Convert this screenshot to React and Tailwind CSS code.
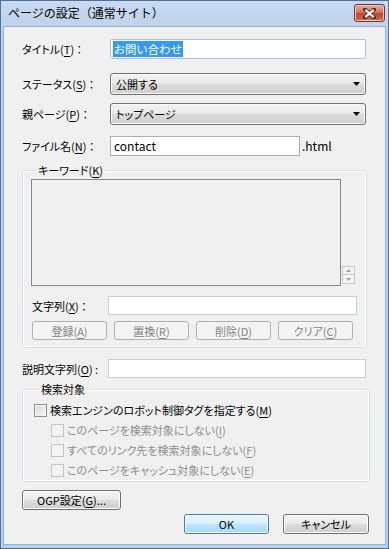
import React from "react";

// mnemonic letter
const U = ({ children }) => <span className="underline underline-offset-[2px]">{children}</span>;

const field = "border border-[#abadb3] bg-white";

const Select = ({ value }) => (
  <div className="flex h-[22px] w-[256px] items-center rounded-[3px] border border-[#707070] bg-[linear-gradient(#f2f2f2,#ebebeb_45%,#dddddd_50%,#cfcfcf)] pl-[5px] shadow-[inset_0_0_0_1px_#fbfbfb]">
    <span className="leading-none">{value}</span>
    <svg className="ml-auto mr-[5px]" width="7" height="4" viewBox="0 0 7 4">
      <path d="M0 0h7L3.5 4z" fill="#000" />
    </svg>
  </div>
);

const GrayBtn = ({ children, w }) => (
  <div
    className={`flex h-[19px] ${w} items-center justify-center rounded-[3px] border border-[#adb2b5] bg-[#f4f4f4] text-[#838383]`}
  >
    {children}
  </div>
);

const Btn = ({ children, w, primary }) => (
  <div
    className={`flex h-[20px] ${w} items-center justify-center rounded-[3px] border ${
      primary
        ? "border-[#3c7fb1] bg-[linear-gradient(#eaf6fd,#d9f0fc_50%,#bee6fd_50%,#a7d9f5)]"
        : "border-[#707070] bg-[linear-gradient(#f2f2f2,#ebebeb_50%,#dddddd_50%,#cfcfcf)]"
    } shadow-[inset_0_0_0_1px_#fcfcfc]`}
  >
    {children}
  </div>
);

const Check = ({ children, disabled, indent }) => (
  <div className={`flex h-[20px] items-center ${indent ? "ml-[17px]" : ""}`}>
    <span
      className={`h-[13px] w-[13px] border ${
        disabled
          ? "border-[#c4c4c4] bg-[#f4f4f4]"
          : "border-[#8f8f8f] bg-[linear-gradient(135deg,#d8d8d8,#f6f6f6)] shadow-[inset_0_0_0_1px_#f4f4f4]"
      }`}
    />
    <span className={`ml-[3px] ${disabled ? "text-[#8d8d8d]" : "text-black"}`}>{children}</span>
  </div>
);

export default function App() {
  return (
    <div className="h-[549px] w-[389px] border border-[#50709a] bg-[linear-gradient(#c8daf0,#bcd1eb_30px,#bcd1eb)] text-[11px] leading-[16px] text-black [font-family:'Noto_Sans_CJK_JP',sans-serif] [font-feature-settings:'palt']">
      <div className="flex h-[25px] items-start">
        <div className="ml-[7px] mt-[4px] text-[12px] [font-feature-settings:normal]">
          ページの設定（通常サイト）
        </div>
        <div className="ml-auto mr-[3px] mt-[3px] flex h-[18px] w-[31px] items-center justify-center rounded-[3px] border border-[#6b3a33] bg-[linear-gradient(#eab0a2,#d7735e_45%,#c4412a_55%,#d76a50)] shadow-[inset_0_0_0_1px_#f3c4b8]">
          <svg width="13" height="11" viewBox="0 0 13 11">
            <path d="M2 1.5l9 8M11 1.5l-9 8" stroke="#5a2a22" strokeWidth="4" strokeLinecap="square" />
            <path d="M2.3 1.8l8.4 7.4M10.7 1.8l-8.4 7.4" stroke="#fff" strokeWidth="2.2" />
          </svg>
        </div>
      </div>

      <div className="mx-[2px] h-[519px] border border-[#98aeca] bg-[#f0f0f0] px-[18px] pt-[12px]">
        <div className="flex items-center">
          <div className="w-[88px]">タイトル(<U>T</U>) ：</div>
          <div className="flex h-[20px] w-[256px] items-center rounded-[2px] border border-[#a9c6e0] bg-white pl-[2px]">
            <span className="bg-[#3399ff] px-[1px] text-[11.5px] text-white">お問い合わせ</span>
          </div>
        </div>

        <div className="mt-[14px] flex items-center">
          <div className="w-[88px]">ステータス(<U>S</U>) ：</div>
          <Select value="公開する" />
        </div>

        <div className="mt-[8px] flex items-center">
          <div className="w-[88px]">親ページ(<U>P</U>) ：</div>
          <Select value="トップページ" />
        </div>

        <div className="mt-[11px] flex items-center">
          <div className="w-[88px]">ファイル名(<U>N</U>) ：</div>
          <div className={`flex h-[20px] w-[190px] items-center pl-[3px] text-[12px] ${field}`}>contact</div>
          <span className="ml-[2px] text-[12px]">.html</span>
        </div>

        <fieldset className="mt-[6px] w-[345px] rounded-[3px] border border-[#d5dfe5] px-[8px] pb-[7px] shadow-[inset_0_0_0_1px_#fff]">
          <legend className="ml-[5px] px-[2px]">
            キーワード(<U>K</U>)
          </legend>
          <div className="mt-[1px] flex items-end">
            <div className="h-[107px] w-[310px] border border-[#828790] bg-[#f0f0f0]" />
            <div className="mb-[2px] ml-[1px] flex w-[13px] flex-col">
              <div className="flex h-[9px] items-center justify-center border border-[#c8c8c8] bg-[#f4f4f4]">
                <svg width="5" height="3" viewBox="0 0 5 3"><path d="M0 3h5L2.5 0z" fill="#a0a0a0" /></svg>
              </div>
              <div className="flex h-[9px] items-center justify-center border border-t-0 border-[#c8c8c8] bg-[#f4f4f4]">
                <svg width="5" height="3" viewBox="0 0 5 3"><path d="M0 0h5L2.5 3z" fill="#a0a0a0" /></svg>
              </div>
            </div>
          </div>

          <div className="mt-[10px] flex items-center">
            <div className="w-[77px] pl-[1px]">文字列(<U>X</U>) ：</div>
            <div className={`h-[19px] w-[249px] ${field} border-[#c9cdd4]`} />
          </div>

          <div className="mt-[6px] flex w-[322px] justify-between pl-[1px]">
            <GrayBtn w="w-[75px]">登録(<U>A</U>)</GrayBtn>
            <GrayBtn w="w-[75px]">置換(<U>R</U>)</GrayBtn>
            <GrayBtn w="w-[75px]">削除(<U>D</U>)</GrayBtn>
            <GrayBtn w="w-[75px]">クリア(<U>C</U>)</GrayBtn>
          </div>
        </fieldset>

        <div className="mt-[11px] flex items-center">
          <div className="w-[86px]">説明文字列(<U>O</U>) :</div>
          <div className={`h-[19px] w-[258px] ${field} border-[#c9cdd4]`} />
        </div>

        <fieldset className="mt-[3px] w-[348px] rounded-[3px] border border-[#d5dfe5] pl-[11px] pb-[1px] shadow-[inset_0_0_0_1px_#fff]">
          <legend className="ml-[5px] px-[2px]">検索対象</legend>
          <div className="mt-[3px]">
            <Check>
              検索エンジンのロボット制御タグを指定する(<U>M</U>)
            </Check>
            <Check disabled indent>
              このページを検索対象にしない(<U>I</U>)
            </Check>
            <Check disabled indent>
              すべてのリンク先を検索対象にしない(<U>F</U>)
            </Check>
            <Check disabled indent>
              このページをキャッシュ対象にしない(<U>E</U>)
            </Check>
          </div>
        </fieldset>

        <div className="mt-[8px]">
          <Btn w="w-[99px]">
            OGP設定(<U>G</U>)...
          </Btn>
        </div>

        <div className="-mr-[2px] mt-[4px] flex justify-end gap-[14px]">
          <Btn w="w-[85px]" primary>
            OK
          </Btn>
          <Btn w="w-[86px]">キャンセル</Btn>
        </div>
      </div>
    </div>
  );
}
